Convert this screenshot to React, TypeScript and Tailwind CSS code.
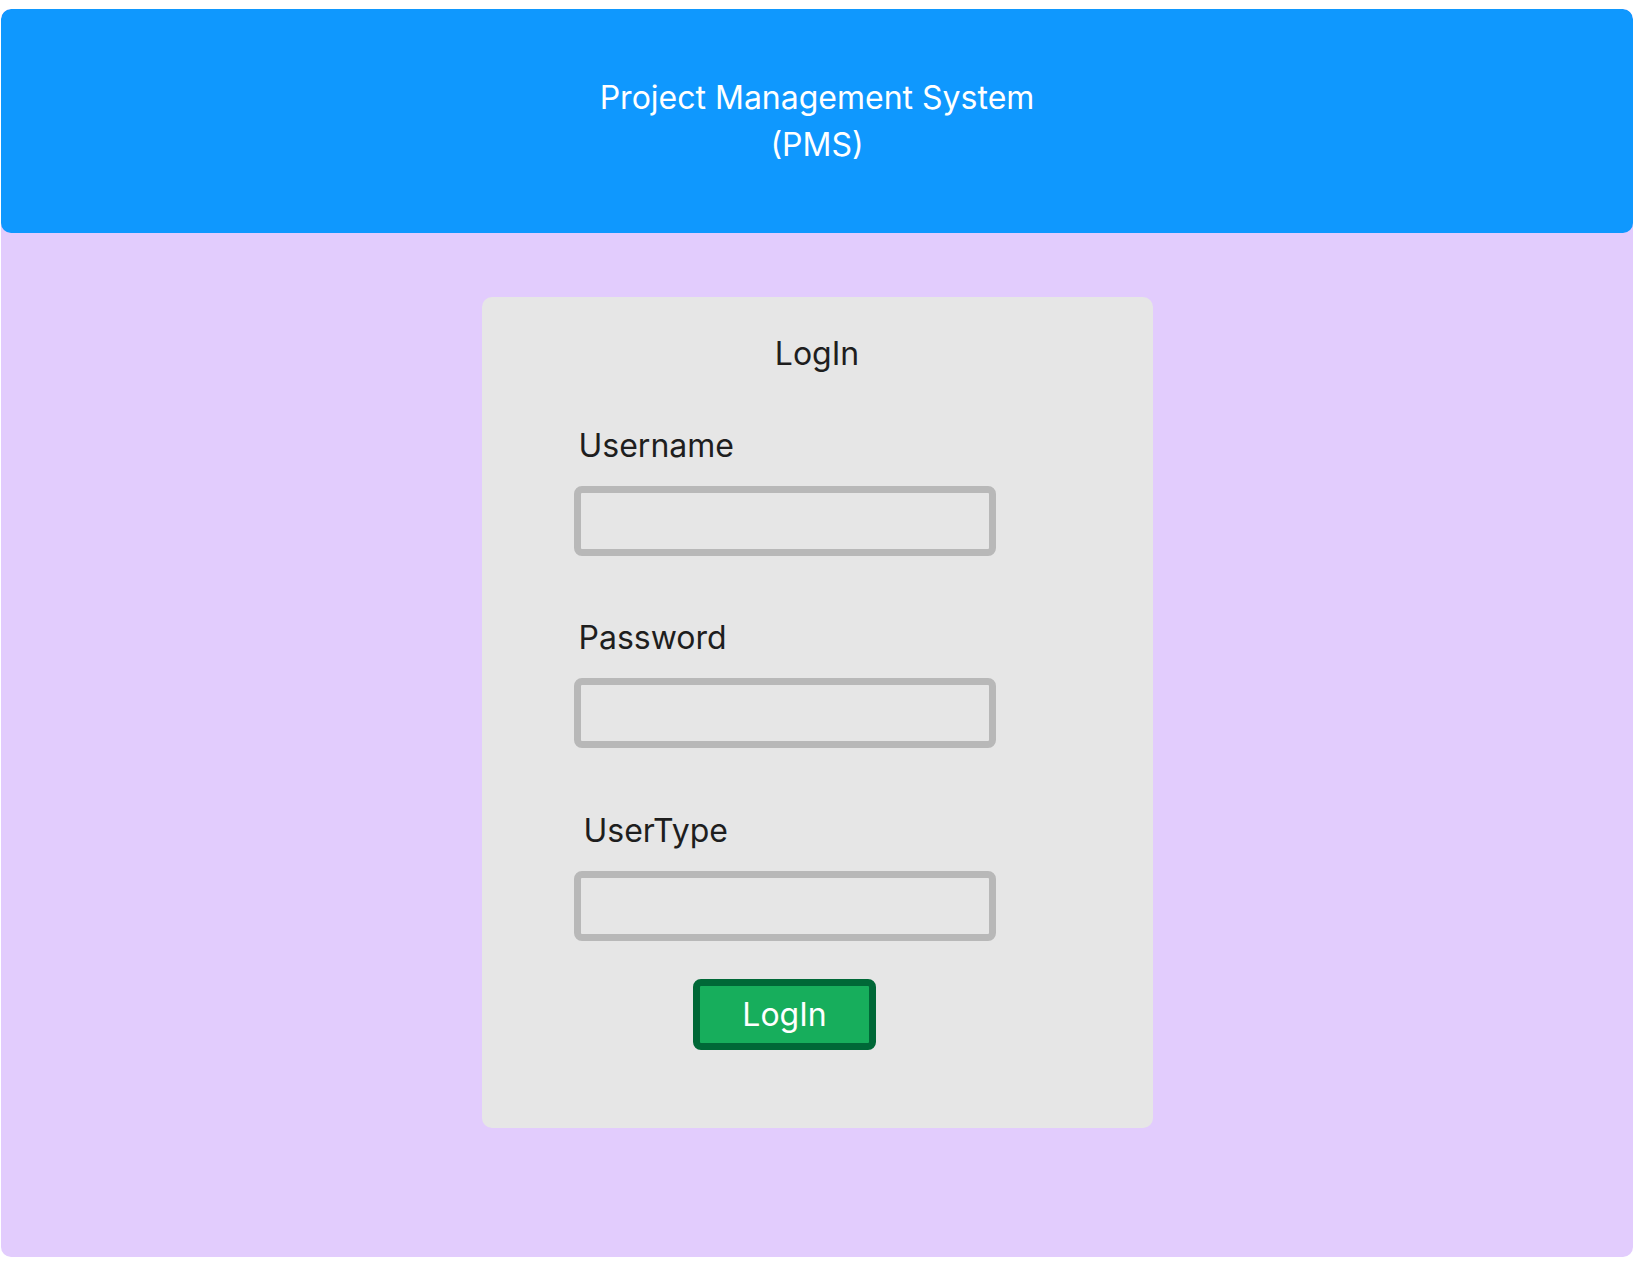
import React from "react";

function Field({ label, indent }: { label: string; indent?: boolean }) {
  return (
    <div className="flex flex-col">
      <label className={`text-[32px] leading-[36px] text-[#1e1e1e] ${indent ? "pl-[10px]" : "pl-[5px]"}`}>{label}</label>
      <div className="mt-[22px] h-[70px] w-[422px] rounded-[8px] border-[7px] border-[#b8b8b8] bg-[#e6e6e6]" />
    </div>
  );
}

export default function App() {
  return (
    <div className="min-h-[1261px] w-[1641px] bg-white pl-[1px] pr-[8px] pt-[9px] pb-[4px]" style={{ fontFamily: "Inter, 'Noto Sans', sans-serif" }}>
      <div className="flex h-[1248px] flex-col overflow-hidden rounded-[10px] bg-[#e2ccfd]">
        <header className="flex h-[224px] shrink-0 flex-col items-center justify-center rounded-[10px] bg-[#0f98fe] text-[32px] leading-[47px] text-white">
          <div>Project Management System</div>
          <div>(PMS)</div>
        </header>
        <div className="flex justify-center pt-[64px]">
          <div className="flex h-[831px] w-[671px] flex-col rounded-[10px] bg-[#e6e6e6] pt-[39px]">
            <div className="text-center text-[32px] leading-[36px] text-[#1e1e1e]">LogIn</div>
            <div className="mt-[56px] flex w-[422px] flex-col self-start ml-[92px]">
              <Field label="Username" />
              <div className="mt-[64px]">
                <Field label="Password" />
              </div>
              <div className="mt-[65px]">
                <Field label="UserType" indent />
              </div>
              <div className="mt-[38px] flex justify-center">
                <button className="flex h-[71px] w-[183px] items-center justify-center rounded-[8px] border-[7px] border-[#006837] bg-[#17ae5c] text-[32px] leading-none text-white">
                  LogIn
                </button>
              </div>
            </div>
          </div>
        </div>
      </div>
    </div>
  );
}
